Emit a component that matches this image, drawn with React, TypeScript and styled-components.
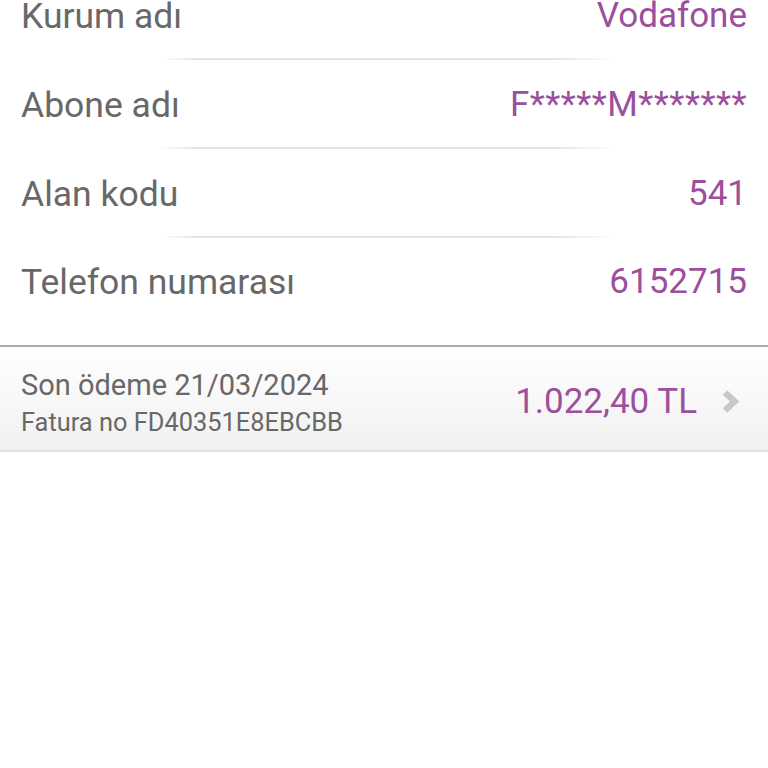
import React from "react";
import styled, { createGlobalStyle } from "styled-components";

const Global = createGlobalStyle`
  html, body { margin: 0; padding: 0; background: #fff; }
  body { font-family: Roboto, "Noto Sans", sans-serif; overflow: hidden; }
`;

const Page = styled.div`
  width: 768px;
  height: 768px;
  overflow: hidden;
  background: #fff;
`;

const List = styled.div`
  display: flex;
  flex-direction: column;
  margin-top: -29px;
`;

const Row = styled.div<{ $last?: boolean }>`
  display: flex;
  align-items: center;
  justify-content: space-between;
  height: ${(p) => (p.$last ? 107 : 87)}px;
  padding: 3px 21px ${(p) => (p.$last ? 22 : 0)}px 21px;
  box-sizing: border-box;
`;

const Divider = styled.div`
  height: 2px;
  margin: 0 152px 0 160px;
  background: linear-gradient(
    to right,
    rgba(226, 226, 226, 0) 0%,
    #e3e3e3 8%,
    #e3e3e3 86%,
    rgba(226, 226, 226, 0) 100%
  );
`;

const Label = styled.span`
  font-size: 35.5px;
  color: #686868;
  line-height: 40px;
`;

const Value = styled.span<{ $spacing?: number }>`
  font-size: 35px;
  color: #9b4f9c;
  line-height: 40px;
  letter-spacing: ${(p) => p.$spacing ?? 0}px;
`;

const SectionRule = styled.div`
  height: 2px;
  background: #ababab;
`;

const Card = styled.div`
  display: flex;
  align-items: center;
  justify-content: space-between;
  height: 105px;
  padding: 0 29px 0 21px;
  box-sizing: border-box;
  background: linear-gradient(to bottom, #ffffff 0%, #f1f1f1 100%);
  border-bottom: 2px solid #e2e2e2;
`;

const CardText = styled.div`
  display: flex;
  flex-direction: column;
  gap: 5px;
  padding-top: 9px;
`;

const CardLine = styled.span<{ $size: number }>`
  font-size: ${(p) => p.$size}px;
  color: #686868;
  line-height: 32px;
`;

const Amount = styled.div`
  display: flex;
  align-items: center;
  gap: 25px;
  padding-top: 6px;
`;

const AmountValue = styled.span`
  font-size: 35px;
  color: #9b4f9c;
`;

const Chevron = () => (
  <svg width="17" height="25" viewBox="0 0 17 25">
    <path
      d="M3 3.5 L12.5 12.5 L3 21.5"
      fill="none"
      stroke="#c8c8c8"
      strokeWidth="6.5"
      strokeLinejoin="miter"
    />
  </svg>
);

const rows: [string, string, number][] = [
  ["Kurum adı", "Vodafone", 0],
  ["Abone adı", "F*****M*******", 0.45],
  ["Alan kodu", "541", 0],
  ["Telefon numarası", "6152715", 0],
];

export default function App() {
  return (
    <Page>
      <Global />
      <List>
        {rows.map(([l, v, s], i) => (
          <React.Fragment key={l}>
            <Row $last={i === rows.length - 1}>
              <Label>{l}</Label>
              <Value $spacing={s}>{v}</Value>
            </Row>
            {i < rows.length - 1 && <Divider />}
          </React.Fragment>
        ))}
      </List>
      <SectionRule />
      <Card>
        <CardText>
          <CardLine $size={29}>Son ödeme 21/03/2024</CardLine>
          <CardLine $size={25.4}>Fatura no FD40351E8EBCBB</CardLine>
        </CardText>
        <Amount>
          <AmountValue>1.022,40 TL</AmountValue>
          <Chevron />
        </Amount>
      </Card>
    </Page>
  );
}
